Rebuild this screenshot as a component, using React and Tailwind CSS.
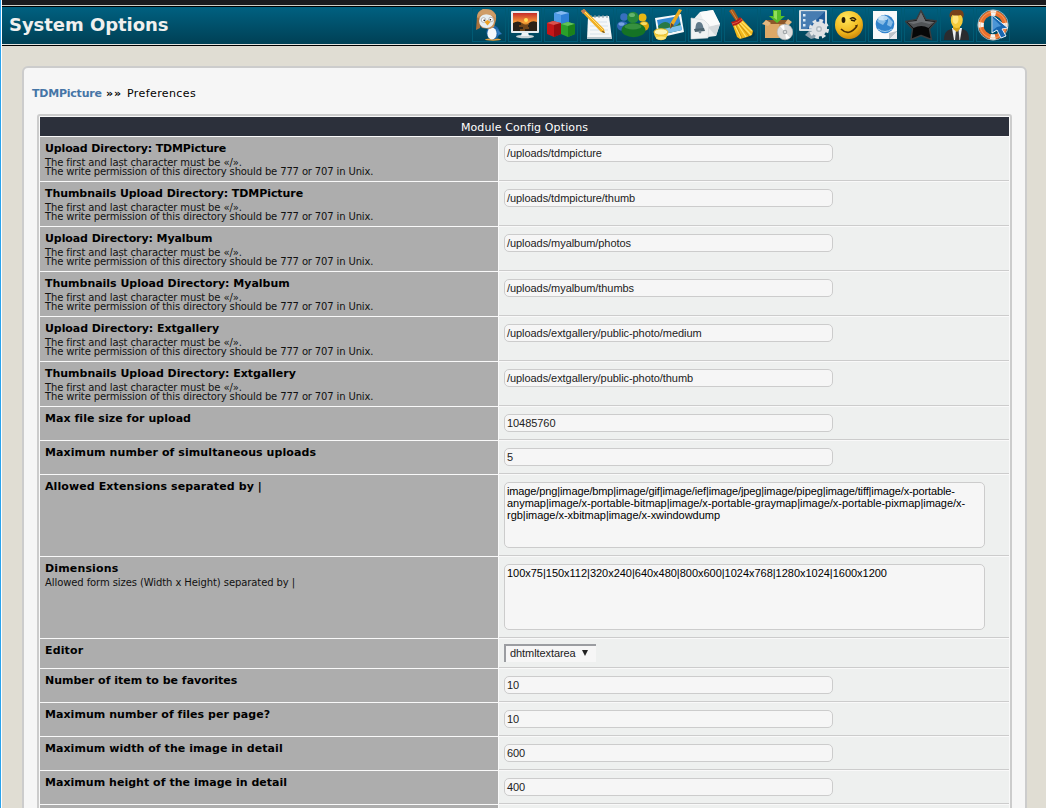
import React from "react";

const SUB = [
  { text: "The first and last character must be «/».", track: "tracking-[-0.12px]" },
  { text: "The write permission of this directory should be 777 or 707 in Unix.", track: "tracking-[-0.14px]" },
];

const ROWS = [
  { title: "Upload Directory: TDMPicture", track: "tracking-[-0.14px]", sub: SUB, type: "text", value: "/uploads/tdmpicture", h: "h-11" },
  { title: "Thumbnails Upload Directory: TDMPicture", track: "tracking-[-0.07px]", sub: SUB, type: "text", value: "/uploads/tdmpicture/thumb", h: "h-11" },
  { title: "Upload Directory: Myalbum", track: "tracking-[-0.09px]", sub: SUB, type: "text", value: "/uploads/myalbum/photos", h: "h-11" },
  { title: "Thumbnails Upload Directory: Myalbum", track: "tracking-[-0.02px]", sub: SUB, type: "text", value: "/uploads/myalbum/thumbs", h: "h-11" },
  { title: "Upload Directory: Extgallery", track: "tracking-[-0.07px]", sub: SUB, type: "text", value: "/uploads/extgallery/public-photo/medium", h: "h-11" },
  { title: "Thumbnails Upload Directory: Extgallery", track: "tracking-[-0.02px]", sub: SUB, type: "text", value: "/uploads/extgallery/public-photo/thumb", h: "h-11" },
  { title: "Max file size for upload", track: "tracking-[0.05px]", type: "text", value: "10485760", h: "h-[33px]" },
  { title: "Maximum number of simultaneous uploads", track: "tracking-[0.09px]", type: "text", value: "5", h: "h-[33px]" },
  {
    title: "Allowed Extensions separated by |",
    track: "tracking-[0.1px]",
    type: "area",
    lines: [
      { text: "image/png|image/bmp|image/gif|image/ief|image/jpeg|image/pipeg|image/tiff|image/x-portable-", track: "tracking-[-0.12px]" },
      { text: "anymap|image/x-portable-bitmap|image/x-portable-graymap|image/x-portable-pixmap|image/x-", track: "tracking-[-0.03px]" },
      { text: "rgb|image/x-xbitmap|image/x-xwindowdump", track: "tracking-[-0.03px]" },
    ],
    h: "h-[81px]",
  },
  {
    title: "Dimensions",
    track: "tracking-[0.15px]",
    sub: [{ text: "Allowed form sizes (Width x Height) separated by |", track: "tracking-[-0.09px]" }],
    type: "area",
    lines: [{ text: "100x75|150x112|320x240|640x480|800x600|1024x768|1280x1024|1600x1200", track: "tracking-[-0.02px]" }],
    h: "h-[81px]",
  },
  { title: "Editor", track: "tracking-[0.15px]", type: "select", value: "dhtmltextarea", h: "h-[29px]" },
  { title: "Number of item to be favorites", track: "tracking-normal", type: "text", value: "10", h: "h-[33px]" },
  { title: "Maximum number of files per page?", track: "tracking-[0.05px]", type: "text", value: "10", h: "h-[33px]" },
  { title: "Maximum width of the image in detail", track: "tracking-[0.05px]", type: "text", value: "600", h: "h-[33px]" },
  { title: "Maximum height of the image in detail", track: "tracking-[0.03px]", type: "text", value: "400", h: "h-[33px]" },
  { title: "", type: "none", h: "h-[33px]" },
];

const ICONS = [
  // penguin
  <g key="0">
    <ellipse cx="20" cy="30.5" rx="8" ry="1.2" fill="#e8a33a" />
    <ellipse cx="20" cy="23.5" rx="6.5" ry="7" fill="#1d66a8" />
    <ellipse cx="19" cy="24.5" rx="4.6" ry="6" fill="#f4f8fb" />
    <path d="M23 19l6 6-4 1z" fill="#2f7cc0" />
    <path d="M4 11C3 3 8 0 13 0c7 0 11 4 10 11l-2 7-4 2-8-1z" fill="#c58f58" />
    <path d="M4 8l-1 13 4-2 2-8z" fill="#a9713c" />
    <ellipse cx="13.5" cy="12" rx="7.5" ry="7" fill="#e6eef2" />
    <path d="M4 9c4-5 13-5 19 0V6l-5-5-8-1-5 4z" fill="#cf9d68" />
    <circle cx="10.500" cy="11" r="2.300" fill="#fff" stroke="#8b8b8b" strokeWidth=".6" />
    <circle cx="18" cy="10.500" r="2.300" fill="#fff" stroke="#8b8b8b" strokeWidth=".6" />
    <circle cx="11.200" cy="11.300" r=".8" /><circle cx="17.400" cy="10.800" r=".8" />
    <path d="M11.500 13l3-2 3 2-3 3.500z" fill="#eda225" />
  </g>,
  // monitor
  <g key="1">
    <ellipse cx="16" cy="27.5" rx="9" ry="1.8" fill="#c9d2d6" />
    <path d="M13 23h6l1 4h-8z" fill="#eef2f4" />
    <rect x="2" y="2" width="28" height="22" rx="1" fill="#e6ebee" />
    <rect x="4" y="4" width="24" height="18" fill="url(#sunset)" />
    <path d="M4 14q5-3 9 0t7 0 8-1v9H4z" fill="#2a2117" />
    <path d="M12 15h8M10 17h9M14 19h6M11 21h5" stroke="#c7731d" strokeWidth=".9" />
    <circle cx="17" cy="11" r="2" fill="#ffe15a" />
  </g>,
  // cubes
  <g key="2">
    <path d="M9 4l7-2 8 2v10l-8 2-7-2z" fill="#2d7fd6" /><path d="M9 4l7-2 8 2-8 2z" fill="#84b9f0" /><path d="M16 6v10l-7-2V4z" fill="#4e9be6" />
    <path d="M2 14l6-2 8 2v11l-7 3-7-3z" fill="#c51619" /><path d="M2 14l6-2 8 2-7 2z" fill="#d9534f" /><path d="M9 16v12l7-3V14z" fill="#960c11" />
    <path d="M16 15l7-2 7 2v10l-7 3-7-3z" fill="#2ba02a" /><path d="M16 15l7-2 7 2-7 2z" fill="#63c159" /><path d="M23 17v11l7-3V15z" fill="#1b811a" />
  </g>,
  // notepad
  <g key="3">
    <path d="M7 8l21-1 3 23H6z" fill="#f5f7f8" />
    <path d="M6 28l25 0v2H6z" fill="#b9c5cc" />
    <path d="M9 13h17M9 17h18M9 21h18M9 25h19" stroke="#d5e1ea" />
    <path d="M10 9V6M14 9V6M18 9V6M22 9V6M26 9V6" stroke="#8899a2" />
    <path d="M0 2l3-2 20 20 1 4-4-1z" fill="#f0ae23" /><path d="M2 1l20 20" stroke="#ffe07a" />
    <path d="M0 2l3-2 2 2-3 3z" fill="#c57c54" /><path d="M22 22l2 2-3-1z" fill="#222" />
  </g>,
  // users
  <g key="4">
    <circle cx="7" cy="8" r="3.8" fill="#386fbe" /><ellipse cx="5.5" cy="17" rx="5.5" ry="4.8" fill="#2f66b5" /><ellipse cx="4.5" cy="15" rx="3" ry="1.8" fill="#77a4df" />
    <circle cx="25.5" cy="8.5" r="4" fill="#e8b714" /><ellipse cx="27" cy="17" rx="5" ry="4.8" fill="#dba50c" /><ellipse cx="27" cy="14.5" rx="3" ry="1.6" fill="#f8dc64" />
    <circle cx="16" cy="8.500" r="5.8" fill="#27883a" /><ellipse cx="15" cy="6" rx="3" ry="2" fill="#65b46d" />
    <ellipse cx="16.5" cy="21" rx="12" ry="7.2" fill="#157325" /><ellipse cx="16" cy="17.5" rx="8.5" ry="3" fill="#36903f" />
  </g>,
  // picture editor
  <g key="5">
    <path d="M2 9l26-4 3 18-26 6z" fill="#f7f9fa" />
    <path d="M4 11l22-4 3 14-22 5z" fill="#3388d2" /><path d="M5 17q7-7 12-2t10-2l1 8-21 5z" fill="#287947" /><path d="M6 21l22-5 1 5-22 5z" fill="#7fc0ea" />
    <path d="M26 0l3 1-9 16-3 2 0-4z" fill="#edaa21" /><path d="M18 14l3 2-4 4z" fill="#6d4524" />
    <path d="M1 23c0 11 14 11 14 0z" fill="#f4d246" /><ellipse cx="8" cy="23" rx="7" ry="3.2" fill="#fff6b5" stroke="#e9ba24" /><ellipse cx="8" cy="29" rx="5" ry="1.5" fill="#ffe77c" />
  </g>,
  // mail
  <g key="6">
    <path d="M11 3l13-2 7 14-4 12-25 3V13z" fill="#eceeef" />
    <path d="M31 15l-12 3 8 9z" fill="#d5d9dc" /><path d="M11 3l13-2 7 14-14 3z" fill="#fbfbfb" />
    <path d="M2 9l13 2 5 5-1 13-17 1z" fill="#f0f2f3" stroke="#d0d5d8" strokeWidth=".6" />
    <path d="M6 21c1-2 0-8 4-8s4 5 5 7z" fill="#60798a" /><path d="M5 20l10-1 1 3-10 1z" fill="#4b626f" /><circle cx="11" cy="23" r="1.400" fill="#788b97" />
  </g>,
  // broom
  <g key="7">
    <ellipse cx="20" cy="25" rx="10" ry="5" fill="#002c3c" opacity=".5" />
    <path d="M4 2l3-2 2 1 5 9-3 2z" fill="#a75a1d" /><path d="M6 1l6 10" stroke="#d48a42" />
    <path d="M7 14l9-5 12 13-1 4-5 2-7 2-3-2z" fill="#f0b81b" />
    <path d="M9 15l7 14M12 14l9 14M14 13l12 13M16 12l11 10" stroke="#ffe168" strokeWidth="1.2" />
    <path d="M11 16l6 13M14 15l10 12" stroke="#b67b0b" strokeWidth=".7" />
    <path d="M6 13q6-1 9-5l3 3q-4 5-10 6z" fill="#b41e19" /><path d="M7 15q6-1 10-5" stroke="#ef6b51" strokeWidth=".7" fill="none" />
  </g>,
  // package
  <g key="8">
    <path d="M4 14h20v15H4z" fill="#c98d4e" /><path d="M4 14h14v15H4z" fill="#dda968" />
    <path d="M4 11h22l2 2-4 2H4z" fill="#8d582a" /><path d="M1 15l4-4 5 3-3 3zM24 14l3-4 4 3-4 4z" fill="#e5b880" />
    <path d="M12 1h8v6h4l-8 7-8-7h4z" fill="#56bd2b" /><path d="M13 2h3v9l-4-3h1z" fill="#93df5c" />
    <circle cx="24" cy="23" r="7.800" fill="#dcdcdc" stroke="#b5b5b5" strokeWidth=".6" /><path d="M24 23l-5-6 4-1zM24 23l5 6-4 1z" fill="#fff" /><circle cx="24" cy="23" r="2.300" fill="#a5a9ac" /><circle cx="24" cy="23" r="1" fill="#eee" />
  </g>,
  // system settings
  <g key="9">
    <path d="M8 26l5-5 7 1 2 6-8 2z" fill="#8da0ac" />
    <rect x="2" y="1" width="28" height="21" rx="1" fill="#d7dfe3" /><rect x="4" y="2.500" width="24" height="17.500" fill="#215b9b" /><path d="M4 2.500h24L10 20H4z" fill="#477cb1" />
    <path d="M6 5h2.500v2.500H6zM6 10h2.500v2.500H6zM6 15h2.500v2.500H6z" fill="#dceaf5" />
    <circle cx="22" cy="20" r="8.500" fill="none" stroke="#e3e6e8" strokeWidth="3" strokeDasharray="3.7 2.976" /><circle cx="22" cy="20" r="7.500" fill="#dfe2e5" /><circle cx="22" cy="20" r="3" fill="#b3bcc2" /><circle cx="22" cy="20" r="1.600" fill="#e8ebee" />
  </g>,
  // smiley
  <g key="10">
    <circle cx="16" cy="16" r="14" fill="url(#smile)" />
    <ellipse cx="10.5" cy="11" rx="1.9" ry="3" fill="#2a1b05" />
    <path d="M17 10q3-3 6 1M18 11l4 1" fill="none" stroke="#2a1b05" strokeWidth="1.6" />
    <path d="M8 20q8 8 16-3" fill="none" stroke="#513104" strokeWidth="1.7" /><path d="M22 17l3-1" stroke="#513104" />
  </g>,
  // web page
  <g key="11">
    <path d="M4 2h24v20l-8 8H4z" fill="#f8f9fa" /><path d="M28 22v8h-8z" fill="#e8ebed" /><path d="M28 22l-8 8 0-6z" fill="#bdc4c9" />
    <circle cx="16" cy="15" r="9.3" fill="#3183cc" /><path d="M8 12q3-6 8-6l-2 4 3 2-3 4-4-2zM19 8l5 5-2 5-4-2 1-4z" fill="#87bbe5" /><ellipse cx="14" cy="9" rx="5" ry="2.5" fill="#d9edfa" opacity=".8" /><path d="M9 20q7 5 14 0" stroke="#a2cfed" fill="none" />
  </g>,
  // star
  <g key="12">
    <path d="M16 1.500l5 9 10.500 1.500-7 8 2 10.500L16 26.500 6 30.500 7.500 20 .5 12.500 11.500 10.500z" fill="#070708" stroke="#3a3d3f" strokeWidth="1.400" strokeLinejoin="round" />
    <path d="M16 3l4.500 9 9 1-6 6q-7-4-15 0l-6-6 9-1z" fill="#515457" />
    <path d="M16 3l4.500 9 9 1-5 2-8-2-8 2-6-2 9-1z" fill="#808487" opacity=".6" />
  </g>,
  // man in a suit
  <g key="13">
    <path d="M3 31c0-8 3-10 8-11h10c5 1 7 4 7 11z" fill="#2a2c2f" />
    <path d="M11 19h10l-2 12h-6z" fill="#eceff1" /><path d="M15 21h2.500l1 10h-4.500z" fill="#383b3f" /><path d="M12 16h7v4l-3 3-4-3z" fill="#d5a419" />
    <ellipse cx="15.8" cy="11" rx="6" ry="8" fill="#f5cb3a" /><ellipse cx="14.500" cy="10" rx="3" ry="5" fill="#ffe57d" />
    <path d="M9 9C7 3 12 0 16 1c6-1 8 4 6 8l-2-3q-5 1-9 0z" fill="#77411a" />
  </g>,
  // help ring with pointer
  <g key="14">
    <circle cx="16" cy="16" r="15.200" fill="none" stroke="#b5ccd4" strokeWidth=".8" />
    <circle cx="16" cy="16" r="12" fill="none" stroke="#e9702d" strokeWidth="5" />
    <circle cx="16" cy="16" r="12" fill="none" stroke="#f4f4f2" strokeWidth="5.400" strokeDasharray="5 13.850" strokeDashoffset="2.500" />
    <circle cx="16" cy="16" r="13" fill="none" stroke="#ffb077" strokeWidth="1" opacity=".6" />
    <path d="M15 6v18l5-3 4 8 5-2-4-7 6-1z" fill="#1766b0" stroke="#e6f1fa" strokeWidth="1" /><path d="M16 9v12l4-3 4-1z" fill="#4b95d6" />
  </g>,
];

function Field({ row }) {
  if (row.type === "text") {
    return (
      <div className="mt-[7px] flex h-[18px] w-[329px] items-center rounded-[5px] border border-[#ccc] bg-[#f6f6f6] pl-0.5 font-['Liberation_Sans',Arial,sans-serif] text-[11px] leading-none tracking-[-0.06px] text-[#222]">
        {row.value}
      </div>
    );
  }
  if (row.type === "area") {
    return (
      <div className="mt-[7px] h-[66px] w-[481px] rounded-[5px] border border-[#ccc] bg-[#f6f6f6] pt-0.5 pl-0.5 font-['Liberation_Sans',Arial,sans-serif] text-[11px] leading-3 whitespace-nowrap text-black">
        {row.lines.map((l) => <div key={l.text} className={l.track}>{l.text}</div>)}
      </div>
    );
  }
  if (row.type === "select") {
    return (
      <div className="mt-[5px] flex h-[18px] w-[92px] items-center border-t-2 border-l-2 border-[#9b9da1] bg-[#f6f6f6] pb-0.5 pl-1 font-['Liberation_Sans',Arial,sans-serif] text-[11px] leading-none tracking-[-0.08px] text-[#222]">
        {row.value}
        <svg className="ml-1.5 h-1.5 w-1.5" viewBox="0 0 6 6"><path d="M0 0h6L3 6z" fill="#222" /></svg>
      </div>
    );
  }
  return null;
}

export default function App() {
  return (
    <div className="relative flex h-[808px] w-[1046px] flex-col overflow-hidden border-l border-[#2ba3ec] bg-[#e0ddd3] font-['DejaVu_Sans',Verdana,sans-serif]">
      <svg className="absolute size-0">
        <defs>
          <linearGradient id="sunset" x1="0" y1="0" x2="0" y2="1"><stop offset="0" stopColor="#c52b29" /><stop offset=".6" stopColor="#ffae38" /></linearGradient>
          <radialGradient id="smile" cx=".4" cy=".25" r=".8"><stop offset="0" stopColor="#ffe65d" /><stop offset=".65" stopColor="#f1b81c" /><stop offset="1" stopColor="#c9800a" /></radialGradient>
        </defs>
      </svg>
      <div className="flex min-h-0 flex-1 flex-col border-l border-white">
        <div className="h-[5px] shrink-0 bg-[#1a1b1f]" />
        <header className="flex h-[41px] shrink-0 items-start border-t border-b border-t-[#d0d0c8] border-b-black bg-[#004357]">
          <div className="flex h-[39px] w-full items-start justify-between border-t border-b border-t-black border-b-[#e4e4df] bg-linear-to-b from-[#006181] to-[#004055] pr-9 pl-[7px]">
            <h1 className="mt-[7px] text-[18px] leading-[22px] font-bold tracking-[-0.05px] whitespace-nowrap text-[#f0f0ee]">System Options</h1>
            <nav className="mt-px flex gap-0.5">
              {ICONS.map((icon, i) => (
                <div key={i} className="size-[34px] border border-[#005a74]">
                  <svg className="size-8" viewBox="0 0 32 32">{icon}</svg>
                </div>
              ))}
            </nav>
          </div>
        </header>
        <main className="mt-5 ml-5 h-[900px] w-[1005px] shrink-0 rounded-t-[6px] border-2 border-[#ccc] bg-[#f6f6f6] pl-[13px]">
          <div className="-ml-[5px] flex h-[46px] items-start pt-[19px] text-[11px] leading-[14px] whitespace-nowrap text-black">
            <span className="w-[74px] font-bold tracking-[-0.22px] text-[#4675a6]">TDMPicture</span>
            <span className="w-[21px] font-bold tracking-[0.8px]">»»</span>
            <span className="tracking-[0.4px]">Preferences</span>
          </div>
          <div className="flex w-[975px] flex-col gap-px rounded-t-[3px] border-2 border-[#ccc] bg-[#f9f9f9] p-px">
            <div className="flex h-[19px] items-center justify-center bg-[#2c303b] pt-0.5 text-[11px] leading-none tracking-[0.12px] text-white">Module Config Options</div>
            {ROWS.map((row, i) => (
              <div key={i} className={"flex shrink-0 gap-px " + row.h}>
                <div className="w-[458px] shrink-0 bg-[#adadad] pt-[5px] pl-[5px] whitespace-nowrap text-black">
                  <div className={"text-[11px] leading-[14px] font-bold " + (row.track || "")}>{row.title}</div>
                  {row.sub && (
                    <div className="mt-0.5 text-[10px] leading-[9px] text-[#111]">
                      {row.sub.map((s) => <div key={s.text} className={s.track}>{s.text}</div>)}
                    </div>
                  )}
                </div>
                <div className="flex-1 border-b border-[#ccc] bg-[#eef0ef] pl-[5px]"><Field row={row} /></div>
              </div>
            ))}
          </div>
        </main>
      </div>
    </div>
  );
}
